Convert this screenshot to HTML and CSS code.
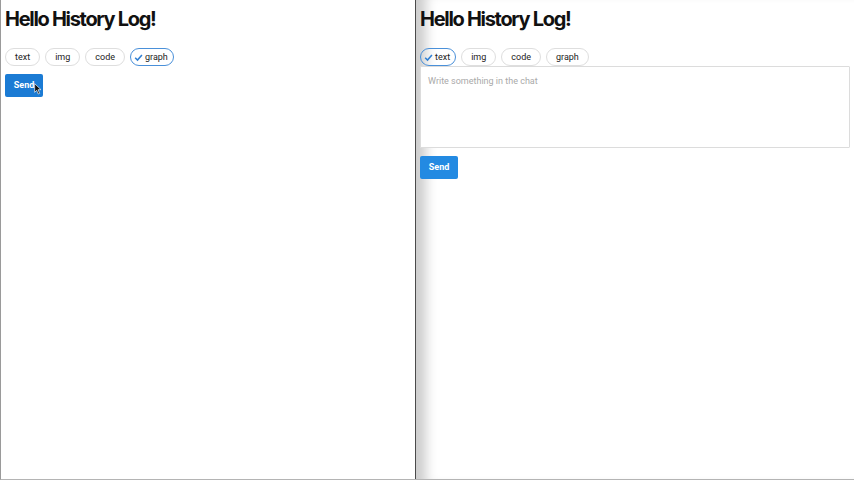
FILE: index.html
```html
<!DOCTYPE html>
<html lang="en">
<head>
    <meta charset="UTF-8">
    <meta name="viewport" content="width=device-width, initial-scale=1.0">
    <title>Hello History Log</title>
    <link rel="stylesheet" href="styles.css">
</head>
<body>
    <div class="frame">

        <!-- Panel izquierdo: sin campo de texto -->
        <div class="pane pane-left">
            <h1 class="title">Hello History Log!</h1>
            <div class="chips">
                <span class="chip">text</span>
                <span class="chip">img</span>
                <span class="chip">code</span>
                <span class="chip chip-on">
                    <svg class="check" viewBox="0 0 10 10"><path d="M1.3 5.3 L3.9 7.8 L8.8 2.2"/></svg>graph
                </span>
            </div>
            <div class="actions">
                <button class="send-btn send-hover">Send
                    <svg class="cursor" viewBox="0 0 12 18"><path d="M1 1 L1 14 L4 11 L6.5 16.5 L8.5 15.5 L6 10 L10.5 10 Z"/></svg>
                </button>
            </div>
        </div>

        <!-- Panel derecho: con campo de texto -->
        <div class="pane pane-right">
            <h1 class="title">Hello History Log!</h1>
            <div class="chips">
                <span class="chip chip-on">
                    <svg class="check" viewBox="0 0 10 10"><path d="M1.3 5.3 L3.9 7.8 L8.8 2.2"/></svg>text
                </span>
                <span class="chip">img</span>
                <span class="chip">code</span>
                <span class="chip">graph</span>
            </div>
            <textarea class="chat-input" placeholder="Write something in the chat"></textarea>
            <div class="actions">
                <button class="send-btn">Send</button>
            </div>
        </div>

    </div>
</body>
</html>
```

FILE: styles.css
```css
/* Estilos generales */
body {
    margin: 0;
    padding: 0;
    font-family: Roboto, "Liberation Sans", sans-serif;
    background-color: #ffffff;
}

.frame {
    display: flex;
    height: 480px;
    box-sizing: border-box;
    border-left: 1px solid #9a9a9a;
    border-bottom: 1px solid #b4b4b4;
}

/* Paneles */
.pane {
    padding: 0 4px;
    box-sizing: border-box;
}

.pane-left {
    width: 415px;
    border-right: 1px solid #4a4a4a;
}

.pane-right {
    flex: 1;
    box-shadow: inset 18px 0 12px -8px rgba(0, 0, 0, 0.2);
}

.title {
    margin: 7px 0 0;
    font-family: Inter, sans-serif;
    font-size: 20px;
    line-height: 24px;
    font-weight: 700;
    letter-spacing: -1.3px;
    color: #111;
}

/* Chips */
.chips {
    display: flex;
    gap: 5px;
    margin-top: 17px;
}

.chip {
    display: inline-flex;
    align-items: center;
    justify-content: center;
    height: 18px;
    min-width: 35px;
    padding: 0 9px;
    box-sizing: border-box;
    border: 1px solid #dedede;
    border-radius: 9px;
    font-size: 9px;
    color: #222;
}

.chip-on {
    border-color: #4a90d9;
    padding: 0 5px 0 3px;
}

.check {
    width: 9px;
    height: 9px;
    margin-right: 2px;
    fill: none;
    stroke: #2f7fd3;
    stroke-width: 1.7;
}

/* Campo de texto */
.chat-input {
    display: block;
    width: 100%;
    height: 82px;
    margin: 0;
    padding: 9px 7px;
    box-sizing: border-box;
    border: 1px solid #dcdcdc;
    border-radius: 1px;
    font-family: Roboto, sans-serif;
    font-size: 9px;
    resize: none;
    outline: none;
}

.chat-input::placeholder {
    color: #a9a9a9;
}

/* Botón de envío */
.actions {
    margin-top: 7px;
}

.send-btn {
    position: relative;
    width: 38px;
    height: 23px;
    padding: 0;
    border: none;
    border-radius: 2px;
    background-color: #238ae2;
    color: #fff;
    font-family: Roboto, sans-serif;
    font-size: 9px;
    font-weight: 700;
    cursor: pointer;
}

.send-hover {
    background-color: #1b7bd4;
}

.cursor {
    position: absolute;
    left: 29px;
    top: 9px;
    width: 8px;
    height: 12px;
    fill: #111;
    stroke: #fff;
    stroke-width: 1;
}
```
